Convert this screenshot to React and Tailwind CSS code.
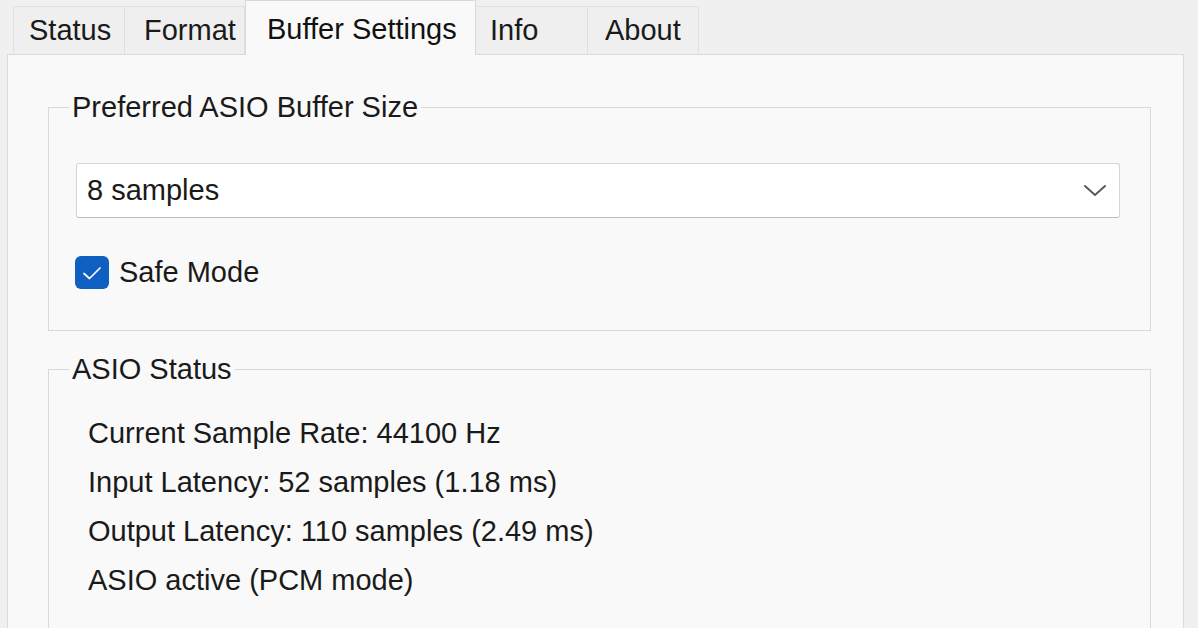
import React from 'react';

const FONT = { fontFamily: '"Liberation Sans", Arial, sans-serif' };

const TABS = [
  { label: 'Status', w: 'w-[112px]', pl: 'pl-[15px]' },
  { label: 'Format', w: 'w-[120px]', pl: 'pl-[19px]' },
  { label: 'Buffer Settings', w: 'w-[231px]', pl: 'pl-[21px]', active: true },
  { label: 'Info', w: 'w-[112px]', pl: 'pl-[14px]' },
  { label: 'About', w: 'w-[111px]', pl: 'pl-[17px]' },
];

const STATUS_LINES = [
  'Current Sample Rate: 44100 Hz',
  'Input Latency: 52 samples (1.18 ms)',
  'Output Latency: 110 samples (2.49 ms)',
  'ASIO active (PCM mode)',
];

function Tab({ tab }) {
  if (tab.active) {
    return (
      <div
        className={`${tab.w} ${tab.pl} relative z-10 h-[55px] -mb-px flex items-start pt-[7px] bg-[#f9f9f9] border border-b-0 border-[#d9d9d9] text-[#111]`}
      >
        {tab.label}
      </div>
    );
  }
  return (
    <div
      className={`${tab.w} ${tab.pl} h-[48px] flex items-center bg-[#efefef] border border-b-0 border-l-0 first:border-l border-[#e0e0e0] text-[#1a1a1a]`}
    >
      {tab.label}
    </div>
  );
}

function GroupBox({ title, className, children }) {
  return (
    <fieldset className={`ml-[40px] w-[1103px] border border-[#d9d9d9] ${className}`}>
      <legend className="ml-[20px] px-[3px] leading-[32px] text-[#1a1a1a]">{title}</legend>
      {children}
    </fieldset>
  );
}

export default function App() {
  return (
    <div className="w-[1198px] h-[628px] overflow-hidden bg-[#f0f0f0] text-[29px]" style={FONT}>
      {/* tab strip */}
      <div className="flex items-end h-[54px] pl-[13px]">
        {TABS.map((t) => (
          <Tab key={t.label} tab={t} />
        ))}
      </div>

      {/* tab page */}
      <div className="ml-[7px] w-[1177px] h-[600px] bg-[#f9f9f9] border border-[#dadada] pt-[36px]">
        <GroupBox title="Preferred ASIO Buffer Size" className="h-[240px]">
          <div className="mt-[40px] ml-[27px] mr-[30px] h-[55px] bg-white border border-[#d6d6d6] border-b-[#bdbdbd] rounded-[3px] flex items-center justify-between pl-[10px] pr-[12px] text-[#1a1a1a]">
            <span>8 samples</span>
            <svg width="24" height="14" viewBox="0 0 24 14" fill="none">
              <polyline points="2,2 12,11 22,2" stroke="#5a5a5a" strokeWidth="2" strokeLinecap="round" strokeLinejoin="round" />
            </svg>
          </div>
          <label className="mt-[33px] ml-[26px] flex items-center gap-[10px] text-[#1a1a1a]">
            <span className="w-[34px] h-[33px] rounded-[6px] bg-[#0f5fc0] flex items-center justify-center">
              <svg width="22" height="18" viewBox="0 0 22 18" fill="none">
                <polyline points="3,9.5 8.5,14.5 19,4" stroke="#ffffff" strokeWidth="1.7" strokeLinecap="round" strokeLinejoin="round" />
              </svg>
            </span>
            <span>Safe Mode</span>
          </label>
        </GroupBox>

        <GroupBox title="ASIO Status" className="mt-[22px] h-[320px]">
          <div className="pt-[24px] pl-[39px] flex flex-col text-[#1a1a1a]">
            {STATUS_LINES.map((line) => (
              <div key={line} className="h-[49px] flex items-center">
                {line}
              </div>
            ))}
          </div>
        </GroupBox>
      </div>
    </div>
  );
}
